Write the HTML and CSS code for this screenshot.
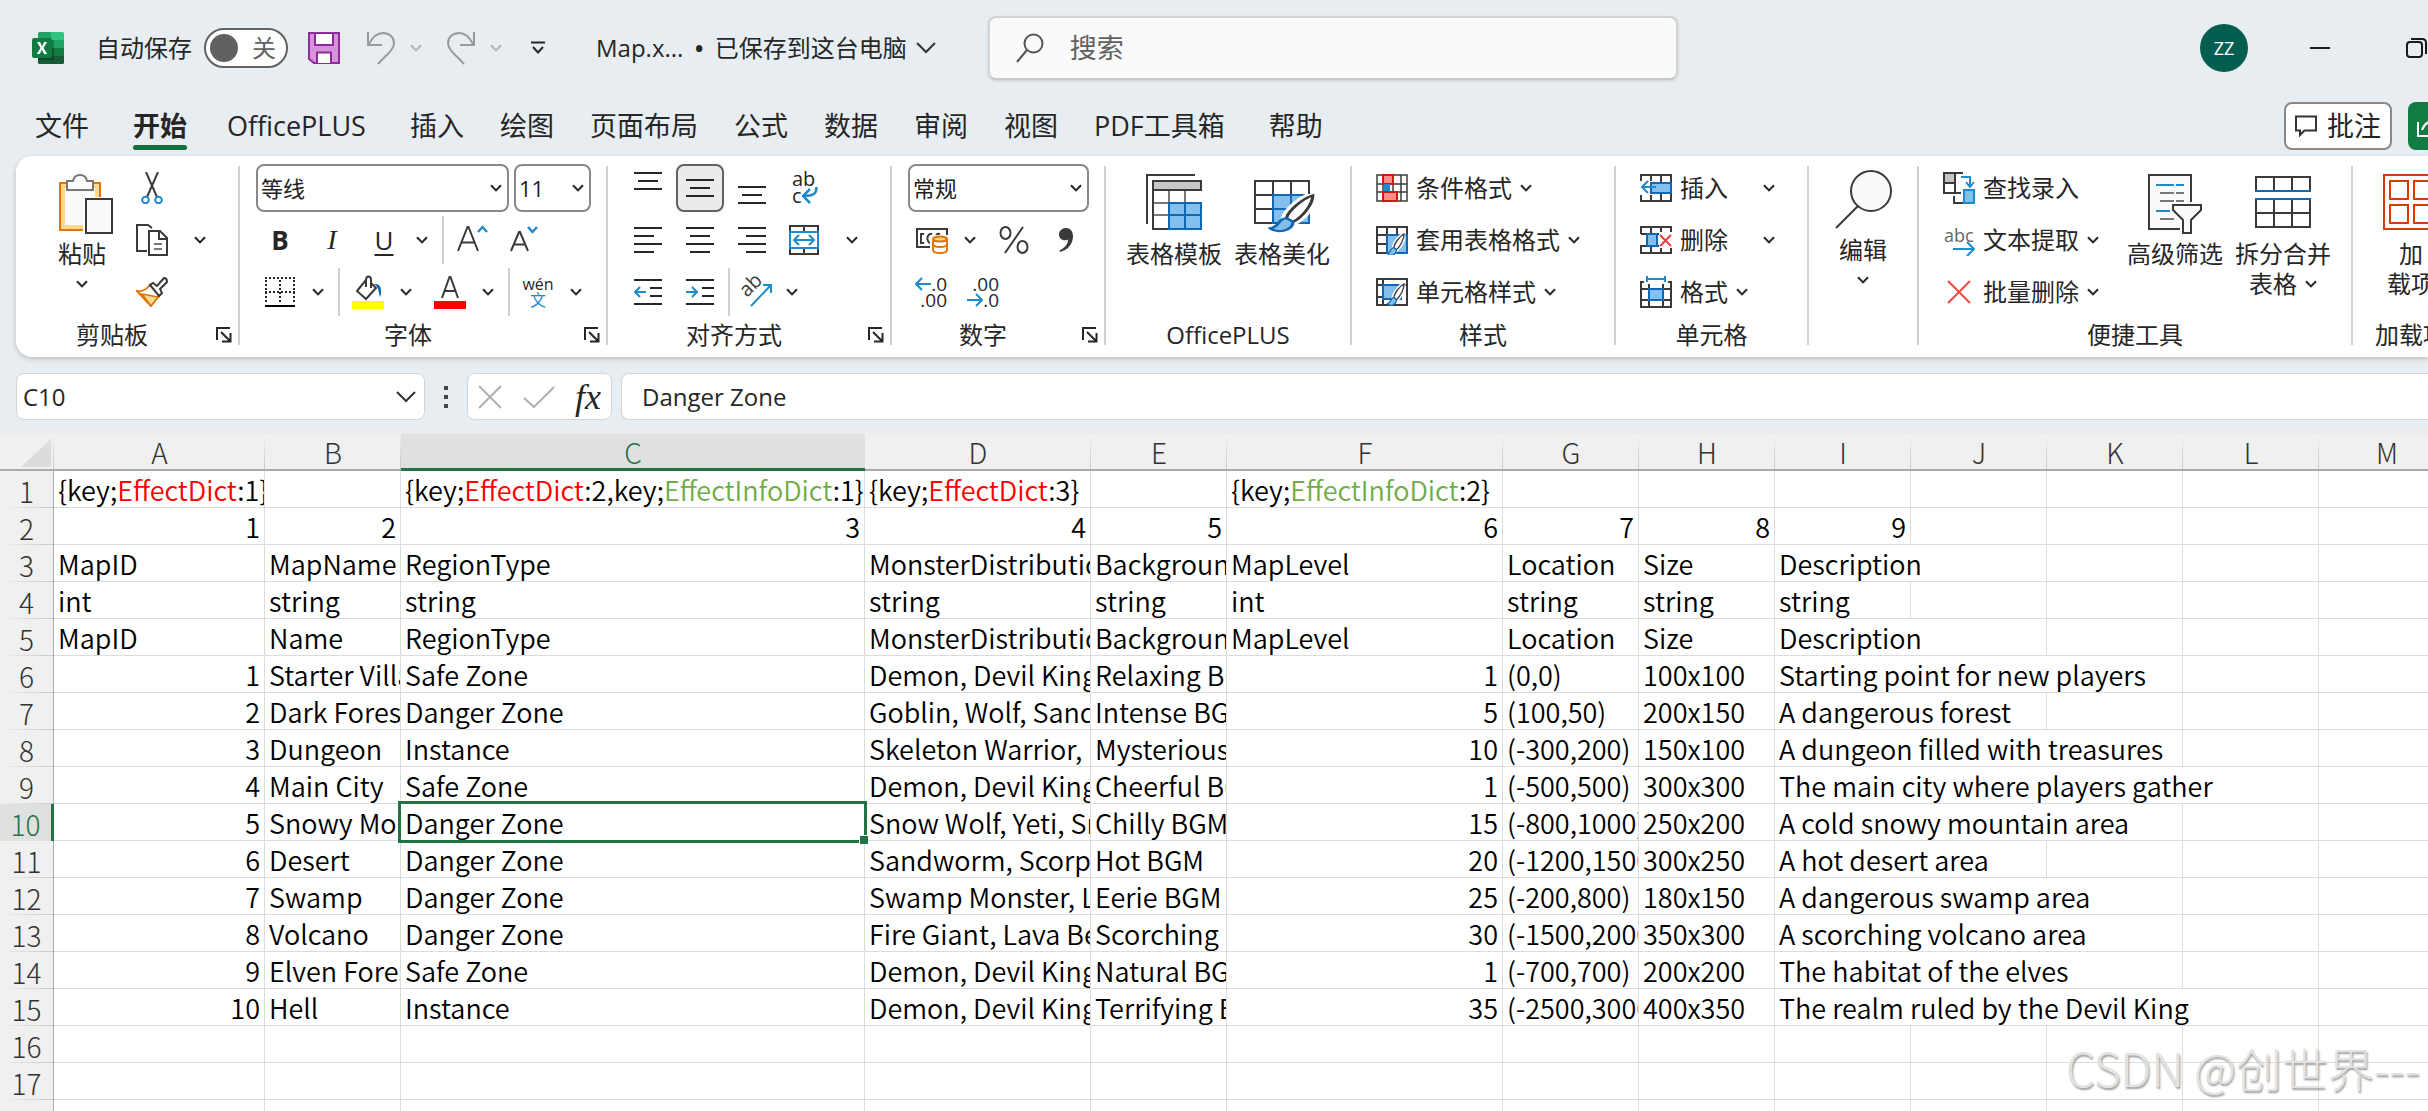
FILE: index.html
```html
<!DOCTYPE html>
<html lang="zh-CN">
<head>
<meta charset="utf-8">
<title>Map.xlsx - Excel</title>
<link rel="stylesheet" href="styles.css">
</head>
<body>
<svg class="defs" aria-hidden="true">
  <symbol id="chev" viewBox="0 0 12 8"><path d="M1 1.2 6 6.4 11 1.2" fill="none" stroke="currentColor" stroke-width="2"/></symbol>
  <symbol id="launch" viewBox="0 0 16 16"><path d="M1 13V1h13M5 5l9 9M14.5 6v8.5H6" fill="none" stroke="#262626" stroke-width="2"/></symbol>
  <symbol id="brush" viewBox="0 0 22 28"><path d="M20.5 1C16 3 9 12 8.500 17l3 2.500C16 16 20.500 7 20.500 1z" fill="#fff" stroke="#fff" stroke-width="5"/><path d="M20.500 1C16 3 9 12 8.500 17l3 2.500C16 16 20.500 7 20.500 1z" fill="#fff" stroke="#3b3a39" stroke-width="1.500"/><path d="M8.500 17c-4 0-3 6-7.500 7 3 3.500 10 2.500 10.500-4.500z" fill="#83beec" stroke="#0f67b5" stroke-width="1.500"/></symbol>
</svg>

<header class="top">
  <div class="titlebar">
    <svg class="excel" width="32" height="32" viewBox="0 0 32 32"><path d="M6 1.500Q6 0 7.500 0H19v8H6z" fill="#21a366"/><path d="M19 0h11.500Q32 0 32 1.500V8H19z" fill="#33c481"/><path d="M6 8h13v8H6z" fill="#107c41"/><path d="M19 8h13v8H19z" fill="#21a366"/><path d="M6 16h13v8H6z" fill="#185c37"/><path d="M19 16h13v8H19z" fill="#107c41"/><path d="M6 24h26v6.500q0 1.500-1.500 1.500h-23Q6 32 6 30.500z" fill="#185c37"/><path d="M6 8h14q2 0 2 2v16q0 2-2 2H6z" opacity=".25"/><rect y="6" width="20" height="20" rx="2" fill="#107c41"/><path d="m5 10h3l2 4.200L12.200 10H15l-3.500 6 3.600 6h-3l-2.200-4.300L7.700 22H4.800l3.700-6z" fill="#fff"/></svg>
    <label class="autosave"><span>自动保存</span><span class="switch"><input type="checkbox"><span>关</span></span></label>
    <button class="plain save" aria-label="保存"><svg width="32" height="32" viewBox="0 0 32 32"><path d="M1 1h30v30H6l-5-4z" fill="#d792dc" stroke="#8e2a9b" stroke-width="2"/><path d="M7 1h18v12H7zM9 31V20.500h14V31" fill="#fff" stroke="#8e2a9b" stroke-width="2"/></svg></button>
    <button class="plain undo" aria-label="撤消"><svg width="30" height="34" viewBox="0 0 30 34"><path d="M2 1v13h14M3 13C7 5 11 2 17 2c6 0 11 4 11 10 0 7-8 12-16 21" fill="none" stroke="#979a9c" stroke-width="2"/></svg></button>
    <button class="plain faint" aria-label="撤消选项"><svg width="12" height="8"><use href="#chev"/></svg></button>
    <button class="plain redo" aria-label="恢复"><svg width="30" height="34" viewBox="0 0 30 34"><path d="M28 1v13H14M27 13C23 5 19 2 13 2 7 2 2 6 2 12c0 7 8 12 16 21" fill="none" stroke="#979a9c" stroke-width="2"/></svg></button>
    <button class="plain faint" aria-label="恢复选项"><svg width="12" height="8"><use href="#chev"/></svg></button>
    <button class="plain qat" aria-label="自定义快速访问工具栏"><svg width="16" height="14" viewBox="0 0 16 14"><path d="M1 1.500h14M3 6l5 5.500L13 6" fill="none" stroke="#262626" stroke-width="2"/></svg></button>
    <button class="plain filename"><span>Map.x...</span><span class="dot">•</span><span>已保存到这台电脑</span><svg width="20" height="12" viewBox="0 0 20 12"><path d="m1 1 9 9 9-9" fill="none" stroke="#333" stroke-width="2"/></svg></button>
    <label class="search"><svg width="28" height="30" viewBox="0 0 28 30"><circle cx="17.500" cy="10.500" r="9" fill="none" stroke="#555" stroke-width="2"/><path d="M11 17 1 29" stroke="#555" stroke-width="2"/></svg><input type="text" placeholder="搜索" aria-label="搜索"></label>
    <button class="avatar">ZZ</button>
    <button class="plain minimize" aria-label="最小化"><svg width="20" height="2"><path d="M0 1h20" stroke="#1a1a1a" stroke-width="2"/></svg></button>
    <button class="plain restore" aria-label="还原"><svg width="22" height="20" viewBox="0 0 22 20"><rect x="1" y="4" width="15" height="15" rx="3" fill="none" stroke="#1a1a1a" stroke-width="2"/><path d="M5 1h11q4 0 4 4v11" fill="none" stroke="#1a1a1a" stroke-width="2"/></svg></button>
  </div>

  <nav class="tabs">
    <a class="tab tab-wide" href="#">文件</a>
    <a class="tab tab-active" href="#">开始</a>
    <a class="tab tab-wide" href="#">OfficePLUS</a>
    <a class="tab" href="#">插入</a>
    <a class="tab" href="#">绘图</a>
    <a class="tab" href="#">页面布局</a>
    <a class="tab" href="#">公式</a>
    <a class="tab" href="#">数据</a>
    <a class="tab" href="#">审阅</a>
    <a class="tab" href="#">视图</a>
    <a class="tab tab-wide" href="#">PDF工具箱</a>
    <a class="tab" href="#">帮助</a>
    <button class="comments"><svg width="22" height="22" viewBox="0 0 22 22"><path d="M1 1.500h20v14H9.500L5 20v-4.500H1z" fill="none" stroke="#333" stroke-width="2"/></svg>批注</button>
    <button class="share" aria-label="共享"><svg width="22" height="22" viewBox="0 0 22 22"><path d="M1 7v14h19v-5M5 15C7 9 11 6 18 6M14 1l6 5-6 5" fill="none" stroke="#fff" stroke-width="2"/></svg></button>
  </nav>

  <section class="ribbon">
    <div class="group g-clip">
      <div class="body">
        <button class="big paste"><svg width="56" height="60" viewBox="0 0 56 60"><path d="M2 9h40v47H2z" fill="#fad98f" stroke="#e07508" stroke-width="2"/><path d="M7 14h30v37H7z" fill="#fafafa"/><path d="M9 7h6q1-6 7-6t7 6h6v9H9z" fill="#fafafa" stroke="#7a7874" stroke-width="2"/><path d="M25 23h31v37H25z" fill="#fff"/><path d="M28 25h26v34H28z" fill="#fafafa" stroke="#3b3a39" stroke-width="2"/></svg><span>粘贴</span><span><svg width="12" height="8"><use href="#chev"/></svg></span></button>
        <div class="rows">
          <div class="row"><button class="tool" aria-label="剪切"><svg width="22" height="32" viewBox="0 0 22 32"><path d="M5 0l11 25M17 0 6 25" stroke="#3b3a39" stroke-width="2"/><circle cx="4.500" cy="28" r="3.300" fill="none" stroke="#1e8bcd" stroke-width="2"/><circle cx="17.500" cy="28" r="3.300" fill="none" stroke="#1e8bcd" stroke-width="2"/></svg></button></div>
          <div class="row"><button class="tool" aria-label="复制"><svg width="32" height="32" viewBox="0 0 32 32"><path d="M11 27H1V1h11l4 3" fill="none" stroke="#3b3a39" stroke-width="2"/><path d="M13 7h11l7 7v17H13z" fill="#fff" stroke="#3b3a39" stroke-width="2"/><path d="M23 7v8h8" fill="none" stroke="#3b3a39" stroke-width="2"/><path d="M18 20h8M18 25h8" stroke="#7a7874" stroke-width="2"/></svg></button><button class="drop far" aria-label="复制选项"><svg width="12" height="8"><use href="#chev"/></svg></button></div>
          <div class="row"><button class="tool" aria-label="格式刷"><svg width="32" height="30" viewBox="0 0 32 30"><path d="M1 14c5 1 9-1 13-6l10 10c-4 4-6 7-9 11z" fill="#fff" stroke="#e07508" stroke-width="2"/><path d="m6 17 16 3-7 9z" fill="#fad98f" stroke="#e07508" stroke-width="1.500"/><path d="m14 8 3-2 4 3 7-8q3 0 3 4l-7 7 2 4-3 3z" fill="#fff" stroke="#3b3a39" stroke-width="2"/></svg></button></div>
        </div>
      </div>
      <div class="foot with-launch"><span>剪贴板</span><button class="plain" aria-label="剪贴板设置"><svg width="16" height="16"><use href="#launch"/></svg></button></div>
    </div>
    <span class="sep"></span>

    <div class="group g-font">
      <div class="rows">
        <div class="row fields"><span class="field font-name"><select aria-label="字体"><option>等线</option></select><svg width="12" height="8"><use href="#chev"/></svg></span><span class="field font-size"><select aria-label="字号"><option>11</option></select><svg width="12" height="8"><use href="#chev"/></svg></span></div>
        <div class="row">
          <button class="tool bold">B</button><button class="tool italic">I</button><button class="tool under">U</button><button class="drop" aria-label="下划线选项"><svg width="12" height="8"><use href="#chev"/></svg></button><span class="vs"></span>
          <button class="tool" aria-label="增大字号"><svg width="32" height="32" viewBox="0 0 32 32"><path d="M2 27 11.500 3h1L22 27M5.500 18.500h13" fill="none" stroke="#3b3a39" stroke-width="2"/><path d="M22 8l4.500-5L31 8" fill="none" stroke="#1e8bcd" stroke-width="2.500"/></svg></button>
          <button class="tool" aria-label="减小字号"><svg width="28" height="32" viewBox="0 0 28 32"><path d="M1 27 9 8h1l8 19M4 20.500h11" fill="none" stroke="#3b3a39" stroke-width="2"/><path d="M18 3l4.500 5L27 3" fill="none" stroke="#1e8bcd" stroke-width="2.500"/></svg></button>
        </div>
        <div class="row">
          <button class="tool" aria-label="边框"><svg width="32" height="32" viewBox="0 0 32 32"><path d="M1 2h30M2 4v23M16 4v23M30 4v23M1 16h30" fill="none" stroke="#262626" stroke-width="2" stroke-dasharray="2 2"/><path d="M1 30h30" stroke="#000" stroke-width="2"/></svg></button><button class="drop" aria-label="边框选项"><svg width="12" height="8"><use href="#chev"/></svg></button><span class="vs"></span>
          <button class="tool" aria-label="填充颜色"><svg width="32" height="34" viewBox="0 0 32 34"><path d="M14 5 5 16l9 8 10-11-5-5M14 12V5q0-3.500 2.500-3.500T19 5v8" fill="none" stroke="#3b3a39" stroke-width="2"/><path d="M22 9c7-1 8 5 6.500 13C26 19 28 13 22 9z" fill="#0f67b5"/><path d="M0 26h32v8H0z" fill="#ff0"/></svg></button><button class="drop" aria-label="填充颜色选项"><svg width="12" height="8"><use href="#chev"/></svg></button>
          <button class="tool near" aria-label="字体颜色"><svg width="32" height="34" viewBox="0 0 32 34"><path d="M8 23 15.500 2h1L24 23M11 16h10" fill="none" stroke="#3b3a39" stroke-width="2"/><path d="M0 26h32v8H0z" fill="#f00"/></svg></button><button class="drop" aria-label="字体颜色选项"><svg width="12" height="8"><use href="#chev"/></svg></button><span class="vs"></span>
          <button class="tool pinyin"><span>wén</span><span class="blue">文</span></button><button class="drop" aria-label="拼音选项"><svg width="12" height="8"><use href="#chev"/></svg></button>
        </div>
      </div>
      <div class="foot with-launch"><span>字体</span><button class="plain" aria-label="字体设置"><svg width="16" height="16"><use href="#launch"/></svg></button></div>
    </div>
    <span class="sep"></span>

    <div class="group g-align">
      <div class="rows">
        <div class="row">
          <button class="tool" aria-label="顶端对齐"><svg width="28" height="32" viewBox="0 0 28 32"><path d="M0 1h28M4 9h20M0 17h28" stroke="#262626" stroke-width="2"/></svg></button><button class="tool" aria-label="垂直居中" aria-pressed="true"><span class="pressed"><svg width="28" height="18" viewBox="0 0 28 18"><path d="M0 1h28M4 9h20M0 17h28" stroke="#262626" stroke-width="2"/></svg></span></button><button class="tool" aria-label="底端对齐"><svg width="28" height="32" viewBox="0 0 28 32"><path d="M0 15h28M4 23h20M0 31h28" stroke="#262626" stroke-width="2"/></svg></button><button class="tool wrap"><span>ab</span><span>c<svg width="16" height="18" viewBox="0 0 16 18"><path d="M14.500 0c0 6-2 9-13 9M8 2 1 9l7 7" fill="none" stroke="#1e8bcd" stroke-width="2.500"/></svg></span></button>
        </div>
        <div class="row">
          <button class="tool" aria-label="左对齐"><svg width="28" height="26" viewBox="0 0 28 26"><path d="M0 1h28M0 9h20M0 17h28M0 25h20" stroke="#262626" stroke-width="2"/></svg></button><button class="tool" aria-label="居中"><svg width="28" height="26" viewBox="0 0 28 26"><path d="M0 1h28M4 9h20M0 17h28M4 25h20" stroke="#262626" stroke-width="2"/></svg></button><button class="tool" aria-label="右对齐"><svg width="28" height="26" viewBox="0 0 28 26"><path d="M0 1h28M8 9h20M0 17h28M8 25h20" stroke="#262626" stroke-width="2"/></svg></button><button class="tool" aria-label="合并后居中"><svg width="30" height="30" viewBox="0 0 30 30"><path d="M1 1h28v28H1zM15 1v28" fill="none" stroke="#3b3a39" stroke-width="2"/><path d="M1 7h28v16H1z" fill="#fff" stroke="#1e8bcd" stroke-width="2"/><path d="M5 15h20M10 10l-5 5 5 5M20 10l5 5-5 5" fill="none" stroke="#1e8bcd" stroke-width="2"/></svg></button><button class="drop far" aria-label="合并选项"><svg width="12" height="8"><use href="#chev"/></svg></button>
        </div>
        <div class="row">
          <button class="tool" aria-label="减少缩进量"><svg width="28" height="26" viewBox="0 0 28 26"><path d="M0 1h28M16 9h12M16 17h12M0 25h28" stroke="#262626" stroke-width="2"/><path d="M12 13H1M6 8l-5 5 5 5" fill="none" stroke="#1e8bcd" stroke-width="2"/></svg></button><button class="tool" aria-label="增加缩进量"><svg width="28" height="26" viewBox="0 0 28 26"><path d="M0 1h28M16 9h12M16 17h12M0 25h28" stroke="#262626" stroke-width="2"/><path d="M0 13h11M6 8l5 5-5 5" fill="none" stroke="#1e8bcd" stroke-width="2"/></svg></button><span class="vs tight"></span>
          <button class="tool slim" aria-label="方向"><svg class="spill" width="34" height="32" viewBox="0 0 34 32"><text x="8" y="22" transform="rotate(-45 8 22)" font-size="20" fill="#3b3a39">ab</text><path d="M12 30 32 9M24 9h8v8" fill="none" stroke="#1e8bcd" stroke-width="2"/></svg></button><button class="drop" aria-label="方向选项"><svg width="12" height="8"><use href="#chev"/></svg></button>
        </div>
      </div>
      <div class="foot with-launch"><span>对齐方式</span><button class="plain" aria-label="对齐设置"><svg width="16" height="16"><use href="#launch"/></svg></button></div>
    </div>
    <span class="sep"></span>

    <div class="group g-num">
      <div class="rows">
        <div class="row fields"><span class="field num-format"><select aria-label="数字格式"><option>常规</option></select><svg width="12" height="8"><use href="#chev"/></svg></span></div>
        <div class="row">
          <button class="tool" aria-label="会计数字格式"><svg width="32" height="28" viewBox="0 0 32 28"><path d="M1 3h30v18H1z" fill="none" stroke="#3b3a39" stroke-width="2"/><path d="M8 8H5v9h3M16 8c-6-1-6 9-1 9M20 10q1-3 4-2" fill="none" stroke="#3b3a39" stroke-width="2"/><path d="M14 9h18v19H14z" fill="#fff"/><path d="M17 13v11q0 3 7 3t7-3V13" fill="#fff" stroke="#e07508" stroke-width="2"/><path d="M17 18q0 3 7 3t7-3" fill="none" stroke="#e07508" stroke-width="2"/><ellipse cx="24" cy="13" rx="7" ry="2.500" fill="#fad98f" stroke="#e07508" stroke-width="2"/></svg></button><button class="drop" aria-label="会计格式选项"><svg width="12" height="8"><use href="#chev"/></svg></button>
          <button class="tool near" aria-label="百分比样式"><svg width="30" height="30" viewBox="0 0 30 30"><path d="M24 2 6 28" stroke="#3b3a39" stroke-width="2"/><ellipse cx="6.500" cy="8" rx="5" ry="6" fill="none" stroke="#3b3a39" stroke-width="2"/><ellipse cx="23.500" cy="22" rx="5" ry="6" fill="none" stroke="#3b3a39" stroke-width="2"/></svg></button><button class="tool" aria-label="千位分隔样式"><svg width="16" height="26" viewBox="0 0 16 26"><path d="M8 1c4 0 7 3 7 8 0 8-5 14-13 16l-.5-1.500C7 21 10 17 10 12.500 5 15 1 11.500 1 7.500 1 4 4 1 8 1z" fill="#3b3a39"/></svg></button>
        </div>
        <div class="row">
          <button class="tool decimals" aria-label="增加小数位数"><span><svg width="16" height="14" viewBox="0 0 16 14"><path d="M16 7H1M7 1 1 7l6 6" fill="none" stroke="#1e8bcd" stroke-width="2"/></svg>.0</span><span>.00</span></button><button class="tool decimals" aria-label="减少小数位数"><span>.00</span><span><svg width="16" height="14" viewBox="0 0 16 14"><path d="M0 7h15M9 1l6 6-6 6" fill="none" stroke="#1e8bcd" stroke-width="2"/></svg>.0</span></button>
        </div>
      </div>
      <div class="foot with-launch"><span>数字</span><button class="plain" aria-label="数字设置"><svg width="16" height="16"><use href="#launch"/></svg></button></div>
    </div>
    <span class="sep"></span>

    <div class="group g-plus">
      <div class="body">
        <button class="big"><svg width="56" height="60" viewBox="0 0 56 60"><path d="M1 50V1h48" fill="none" stroke="#3b3a39" stroke-width="2"/><path d="M7 7h48v48H7z" fill="#fff"/><path d="M7 7h48v9H7z" fill="#c8c6c4"/><path d="M7 16h48M23 16v39M39 16v39M7 29h48M7 41h48" fill="none" stroke="#7a7874" stroke-width="2"/><path d="M7 7h48v9H7zM7 16v39h16" fill="none" stroke="#3b3a39" stroke-width="2"/><path d="M23 29h32v26H23zM39 29v26M23 41h32" fill="#83beec" stroke="#0f67b5" stroke-width="2"/></svg><span>表格模板</span></button>
        <button class="big"><svg width="56" height="60" viewBox="0 0 56 60" class="spill"><path d="M1 7h54v42H1zM19 7v42M37 7v14M1 21h54M1 35h18" fill="none" stroke="#3b3a39" stroke-width="2"/><path d="M19 21h36v28H19zM37 21v28M19 35h36" fill="#83beec" stroke="#0f67b5" stroke-width="2"/><svg x="14" y="20" width="48" height="40" viewBox="0 0 22 28" preserveAspectRatio="none"><use href="#brush"/></svg></svg><span>表格美化</span></button>
      </div>
      <div class="foot"><span>OfficePLUS</span></div>
    </div>
    <span class="sep"></span>

    <div class="group g-style">
      <div class="rows">
        <div class="row"><button class="item"><svg width="32" height="28" viewBox="0 0 32 28"><path d="M1 1h30v26H1zM1 10h30M1 18h30M7 1v26M17 1v26M25 1v26" fill="#fff" stroke="#3b3a39" stroke-width="1.500"/><path d="M7 1h10v9H7z" fill="#ff8d8d" stroke="#d2190b" stroke-width="2"/><path d="M8 10h6v8H8z" fill="#1e8bcd"/><path d="M7 18h14v9H7z" fill="#ff8d8d" stroke="#d2190b" stroke-width="2"/></svg>条件格式<svg width="12" height="8"><use href="#chev"/></svg></button></div>
        <div class="row"><button class="item"><svg width="32" height="30" viewBox="0 0 32 30"><path d="M1 2h30v26H1zM11 2v26M21 2v8M1 10h30M1 19h10" fill="#fff" stroke="#3b3a39" stroke-width="2"/><path d="M11 10h20v18H11z" fill="#83beec" stroke="#0f67b5" stroke-width="2"/><svg x="8" y="8" width="24" height="24" viewBox="0 0 22 28"><use href="#brush"/></svg></svg>套用表格格式<svg width="12" height="8"><use href="#chev"/></svg></button></div>
        <div class="row"><button class="item"><svg width="32" height="30" viewBox="0 0 32 30"><path d="M1 2h30v26H1zM7 2v26M1 8h30M1 20h6" fill="#fff" stroke="#3b3a39" stroke-width="2"/><path d="M7 8h18v14H7z" fill="#83beec" stroke="#0f67b5" stroke-width="2"/><svg x="8" y="6" width="24" height="24" viewBox="0 0 22 28"><use href="#brush"/></svg></svg>单元格样式<svg width="12" height="8"><use href="#chev"/></svg></button></div>
      </div>
      <div class="foot"><span>样式</span></div>
    </div>
    <span class="sep"></span>

    <div class="group g-cells">
      <div class="rows">
        <div class="row"><button class="item"><svg width="32" height="28" viewBox="0 0 32 28"><path d="M1 1h30v26H1zM1 9h30M1 19h30M11 1v26M21 1v26" fill="#fff" stroke="#3b3a39" stroke-width="2"/><path d="M0 7h12v14H0z" fill="#fff"/><path d="M11 9h20v10H11z" fill="#83beec" stroke="#0f67b5" stroke-width="2"/><path d="M16 13H2M8 7l-6 6 6 6" fill="none" stroke="#1e8bcd" stroke-width="2"/></svg>插入</button><button class="drop split" aria-label="插入选项"><svg width="12" height="8"><use href="#chev"/></svg></button></div>
        <div class="row"><button class="item"><svg width="32" height="28" viewBox="0 0 32 28"><path d="M1 8V1h30v7H1M11 1v7M21 1v7M1 27v-7h30v7zM11 20v7M21 20v7M1 8h6v12H1" fill="#fff" stroke="#3b3a39" stroke-width="2"/><path d="M7 8h10v12H7z" fill="#83beec" stroke="#0f67b5" stroke-width="2"/><path d="M19 6h13v16H19z" fill="#fff"/><path d="m20 9 11 11M31 9 20 20" stroke="#e8413c" stroke-width="2"/></svg>删除</button><button class="drop split" aria-label="删除选项"><svg width="12" height="8"><use href="#chev"/></svg></button></div>
        <div class="row"><button class="item"><svg width="32" height="32" viewBox="0 0 32 32"><path d="M4 6H1v25h30V6h-3M1 13h30M1 24h30M9 8v23M23 8v23" fill="none" stroke="#3b3a39" stroke-width="2"/><path d="M9 13h14v11H9z" fill="#83beec" stroke="#0f67b5" stroke-width="2"/><path d="M7 0v6M25 0v6M7 3h18" stroke="#1e8bcd" stroke-width="2"/></svg>格式<svg width="12" height="8"><use href="#chev"/></svg></button></div>
      </div>
      <div class="foot"><span>单元格</span></div>
    </div>
    <span class="sep"></span>

    <div class="group g-edit">
      <div class="body">
        <button class="big raised"><svg width="60" height="60" viewBox="0 0 60 60"><circle cx="38" cy="21" r="20" fill="#fafafa" stroke="#3b3a39" stroke-width="2"/><path d="M25 36 3 58" stroke="#3b3a39" stroke-width="2"/></svg><span>编辑</span><span><svg width="12" height="8"><use href="#chev"/></svg></span></button>
      </div>
      <div class="foot"></div>
    </div>
    <span class="sep"></span>

    <div class="group g-tools">
      <div class="body">
        <div class="rows tools-list">
          <div class="row"><button class="item"><svg width="32" height="32" viewBox="0 0 32 32"><path d="M1 1h11v10H1z" fill="#c8c6c4"/><path d="M20 1H1v20h17M12 1v20M1 11h12M11 24v7h9" fill="none" stroke="#3b3a39" stroke-width="2"/><path d="M21 18h10v13H21z" fill="#83beec" stroke="#1e8bcd" stroke-width="2"/><path d="M19 9h8v7z" fill="#fff"/><path d="M18 5h9v10M23 10l4 5 4-5" fill="none" stroke="#1e8bcd" stroke-width="2"/></svg>查找录入</button></div>
          <div class="row"><button class="item"><svg width="32" height="32" viewBox="0 0 32 32"><text x="1" y="18" font-size="18" fill="#666">abc</text><path d="M10 25h20M24 18l7 7-7 7" fill="none" stroke="#1e8bcd" stroke-width="2"/></svg>文本提取<svg width="12" height="8"><use href="#chev"/></svg></button></div>
          <div class="row"><button class="item"><svg width="32" height="28" viewBox="0 0 32 28"><path d="m5 3 22 22M27 3 5 25" stroke="#f04a43" stroke-width="2"/></svg>批量删除<svg width="12" height="8"><use href="#chev"/></svg></button></div>
        </div>
        <button class="big"><svg width="54" height="60" viewBox="0 0 54 60"><path d="M1 1h42v54H1z" fill="#fafafa" stroke="#3b3a39" stroke-width="2"/><path d="M8 11h18M28 11h8M8 37h14" stroke="#1e8bcd" stroke-width="2"/><path d="M12 19h14M28 19h8M12 27h14M28 27h8M12 45h14" stroke="#7a7874" stroke-width="2"/><path d="M22 28h32v32H32V47L22 37z" fill="#fff"/><path d="M25 31h28v5L43 46v13h-8V46L25 36z" fill="#fafafa" stroke="#3b3a39" stroke-width="2"/></svg><span>高级筛选</span></button>
        <button class="big"><svg width="56" height="60" viewBox="0 0 56 60"><path d="M1 17V3h54v14M19 3v14M37 3v14M1 25v28h54V25M19 25v28M37 25v28M1 39h54" fill="none" stroke="#3b3a39" stroke-width="2"/><path d="M0 17h56M0 25h56" stroke="#0f67b5" stroke-width="2"/></svg><span>拆分合并</span><span>表格 <svg width="12" height="8"><use href="#chev"/></svg></span></button>
      </div>
      <div class="foot"><span>便捷工具</span></div>
    </div>
    <span class="sep"></span>

    <div class="group g-addins">
      <div class="body">
        <button class="big"><svg width="56" height="60" viewBox="0 0 56 60"><path d="M1 1h54v54H1zM7 7h18v18H7zM31 7h18v18H31zM7 31h18v18H7zM31 31h18v18H31z" fill="none" stroke="#d83b01" stroke-width="2"/></svg><span>加</span><span>载项</span></button>
      </div>
      <div class="foot"><span>加载项</span></div>
    </div>
  </section>

  <div class="formulabar">
    <span class="box namebox"><input type="text" value="C10" aria-label="名称框"><svg width="20" height="12" viewBox="0 0 20 12"><path d="m1 1 9 9 9-9" fill="none" stroke="#333" stroke-width="2"/></svg></span>
    <svg class="grip" width="4" height="22" viewBox="0 0 4 22"><path d="M0 0h4v4H0zM0 9h4v4H0zM0 18h4v4H0z" fill="#444"/></svg>
    <span class="box fx"><button class="plain" aria-label="取消"><svg width="24" height="24" viewBox="0 0 24 24"><path d="m1 1 22 22M23 1 1 23" stroke="#b0b0b0" stroke-width="2"/></svg></button><button class="plain" aria-label="输入"><svg width="32" height="22" viewBox="0 0 32 22"><path d="m1 12 10 9L31 1" fill="none" stroke="#b0b0b0" stroke-width="2"/></svg></button><button class="plain fxbtn">fx</button></span>
    <span class="box entry"><input type="text" value="Danger Zone" aria-label="编辑栏"></span>
  </div>
</header>

<main class="sheet">
<table class="grid">
<colgroup><col class="c-head"><col class="c-a"><col class="c-std"><col class="c-c"><col class="c-d"><col class="c-std"><col class="c-f"><col class="c-std"><col class="c-std"><col class="c-std"><col class="c-std"><col class="c-std"><col class="c-std"><col class="c-std"></colgroup>
<thead><tr><th class="corner"><svg width="30" height="28" viewBox="0 0 30 28"><path d="M30 0v28H0z" fill="#dcdcdc"/></svg></th><th>A</th><th>B</th><th class="on">C</th><th>D</th><th>E</th><th>F</th><th>G</th><th>H</th><th>I</th><th>J</th><th>K</th><th>L</th><th>M</th></tr></thead>
<tbody>
<tr><th>1</th><td>{key;<span class="red">EffectDict</span>:1}</td><td></td><td>{key;<span class="red">EffectDict</span>:2,key;<span class="green">EffectInfoDict</span>:1}</td><td>{key;<span class="red">EffectDict</span>:3}</td><td></td><td>{key;<span class="green">EffectInfoDict</span>:2}</td><td></td><td></td><td></td><td></td><td></td><td></td><td></td></tr>
<tr><th>2</th><td class="n">1</td><td class="n">2</td><td class="n">3</td><td class="n">4</td><td class="n">5</td><td class="n">6</td><td class="n">7</td><td class="n">8</td><td class="n">9</td><td></td><td></td><td></td><td></td></tr>
<tr><th>3</th><td>MapID</td><td>MapName</td><td>RegionType</td><td>MonsterDistribution</td><td>Background</td><td>MapLevel</td><td>Location</td><td>Size</td><td colspan="2">Description</td><td></td><td></td><td></td></tr>
<tr><th>4</th><td>int</td><td>string</td><td>string</td><td>string</td><td>string</td><td>int</td><td>string</td><td>string</td><td>string</td><td></td><td></td><td></td><td></td></tr>
<tr><th>5</th><td>MapID</td><td>Name</td><td>RegionType</td><td>MonsterDistribution</td><td>Background</td><td>MapLevel</td><td>Location</td><td>Size</td><td colspan="2">Description</td><td></td><td></td><td></td></tr>
<tr><th>6</th><td class="n">1</td><td>Starter Villa</td><td>Safe Zone</td><td>Demon, Devil King</td><td>Relaxing BG</td><td class="n">1</td><td>(0,0)</td><td>100x100</td><td colspan="3">Starting point for new players</td><td></td><td></td></tr>
<tr><th>7</th><td class="n">2</td><td>Dark Forest</td><td>Danger Zone</td><td>Goblin, Wolf, Sand</td><td>Intense BGM</td><td class="n">5</td><td>(100,50)</td><td>200x150</td><td colspan="2">A dangerous forest</td><td></td><td></td><td></td></tr>
<tr><th>8</th><td class="n">3</td><td>Dungeon</td><td>Instance</td><td>Skeleton Warrior,</td><td>Mysterious</td><td class="n">10</td><td>(-300,200)</td><td>150x100</td><td colspan="3">A dungeon filled with treasures</td><td></td><td></td></tr>
<tr><th>9</th><td class="n">4</td><td>Main City</td><td>Safe Zone</td><td>Demon, Devil King</td><td>Cheerful BG</td><td class="n">1</td><td>(-500,500)</td><td>300x300</td><td colspan="4">The main city where players gather</td><td></td></tr>
<tr><th class="on">10</th><td class="n">5</td><td>Snowy Mou</td><td class="selected">Danger Zone<span class="cursor"></span></td><td>Snow Wolf, Yeti, Sn</td><td>Chilly BGM</td><td class="n">15</td><td>(-800,1000)</td><td>250x200</td><td colspan="3">A cold snowy mountain area</td><td></td><td></td></tr>
<tr><th>11</th><td class="n">6</td><td>Desert</td><td>Danger Zone</td><td>Sandworm, Scorpi</td><td>Hot BGM</td><td class="n">20</td><td>(-1200,1500)</td><td>300x250</td><td colspan="2">A hot desert area</td><td></td><td></td><td></td></tr>
<tr><th>12</th><td class="n">7</td><td>Swamp</td><td>Danger Zone</td><td>Swamp Monster, L</td><td>Eerie BGM</td><td class="n">25</td><td>(-200,800)</td><td>180x150</td><td colspan="3">A dangerous swamp area</td><td></td><td></td></tr>
<tr><th>13</th><td class="n">8</td><td>Volcano</td><td>Danger Zone</td><td>Fire Giant, Lava Bea</td><td>Scorching</td><td class="n">30</td><td>(-1500,2000)</td><td>350x300</td><td colspan="3">A scorching volcano area</td><td></td><td></td></tr>
<tr><th>14</th><td class="n">9</td><td>Elven Forest</td><td>Safe Zone</td><td>Demon, Devil King</td><td>Natural BGM</td><td class="n">1</td><td>(-700,700)</td><td>200x200</td><td colspan="3">The habitat of the elves</td><td></td><td></td></tr>
<tr><th>15</th><td class="n">10</td><td>Hell</td><td>Instance</td><td>Demon, Devil King</td><td>Terrifying BG</td><td class="n">35</td><td>(-2500,3000)</td><td>400x350</td><td colspan="4">The realm ruled by the Devil King</td><td></td></tr>
<tr><th>16</th><td></td><td></td><td></td><td></td><td></td><td></td><td></td><td></td><td></td><td></td><td></td><td></td><td></td></tr>
<tr><th>17</th><td></td><td></td><td></td><td></td><td></td><td></td><td></td><td></td><td></td><td></td><td></td><td></td><td></td></tr>
<tr><th>18</th><td></td><td></td><td></td><td></td><td></td><td></td><td></td><td></td><td></td><td></td><td></td><td></td><td></td></tr>
</tbody>
</table>
<span class="watermark">CSDN @创世界---</span>
</main>
</body>
</html>
```
FILE: styles.css
```css
* { box-sizing: border-box; }

body {
  margin: 0;
  height: 100vh;
  overflow: hidden;
  display: flex;
  flex-direction: column;
  background: #e8edf1;
  color: #262626;
  font: 24px/30px "Open Sans", "Noto Sans CJK SC", sans-serif;
}

button, input, select { font: inherit; color: inherit; margin: 0; padding: 0; }
button { border: 0; background: none; white-space: nowrap; }
svg { flex: none; display: block; }
.spill { overflow: visible; }
.defs { position: absolute; width: 0; height: 0; }
.plain { display: flex; align-items: center; justify-content: center; }
.top { flex: none; }

/* title bar */
.titlebar { display: flex; align-items: center; height: 96px; padding-left: 32px; }
.autosave { display: flex; align-items: center; gap: 12px; margin-left: 32px; white-space: nowrap; }
.switch {
  display: flex; align-items: center; justify-content: space-between;
  width: 84px; height: 40px; padding: 0 10px 0 4px;
  border: 2px solid #616161; border-radius: 20px; background: #fff; color: #616161;
}
.switch input { appearance: none; width: 28px; height: 28px; border-radius: 50%; background: #616161; }
.save { margin-left: 20px; }
.undo { margin: 0 14px 0 26px; }
.redo { margin: 0 14px 0 24px; }
.faint { color: #b4b8bb; }
.qat { margin-left: 28px; }
.filename { margin-left: 50px; }
.filename .dot { margin: 0 10px; font-size: 30px; }
.filename svg { margin-left: 9px; }
.search {
  display: flex; align-items: center; gap: 26px;
  flex: 0 1 690px; height: 64px; margin-left: 52px; padding-left: 26px;
  border: 2px solid #d4d4d4; border-bottom-color: #c8c8c8; border-radius: 8px;
  background: #fafafa; box-shadow: 0 1px 3px #0002;
}
.search input { flex: 1; min-width: 0; border: 0; outline: 0; background: none; font-size: 27px; }
.search input::placeholder { color: #616161; opacity: 1; }
.avatar {
  width: 48px; height: 48px; margin-left: auto; border-radius: 50%;
  background: #035e50; color: #fff; font-size: 18px; text-align: center;
}
.minimize { margin: 0 76px 0 62px; }

/* tabs */
.tabs { display: flex; height: 60px; padding: 6px 0 6px 17px; font-size: 27px; }
.tab {
  display: flex; flex-direction: column; justify-content: space-between;
  margin: 0 18px; padding-top: 7px; line-height: 34px;
  color: #262626; text-decoration: none; white-space: nowrap;
}
.tab-wide { margin-right: 26px; }
.tab-active { font-weight: 700; margin-right: 22px; }
.tab-active::after { content: ""; height: 5px; border-radius: 3px; background: #0f703b; }
.comments {
  display: flex; align-items: center; justify-content: center; gap: 10px;
  width: 108px; height: 48px; margin-left: auto;
  border: 2px solid #8a8886; border-radius: 8px; background: #fff;
}
.share { width: 20px; margin-left: 16px; padding-left: 9px; border-radius: 8px 0 0 8px; background: #107c41; overflow: hidden; }

/* ribbon */
.ribbon {
  display: flex; height: 201px; margin-left: 16px; padding-top: 6px; overflow: hidden;
  border-radius: 16px 0 0 16px; background: #fff; box-shadow: 0 2px 5px #0003;
}
.sep { flex: none; width: 2px; height: 179px; margin-top: 4px; background: #d1d1d1; }
.group { flex: none; display: flex; flex-direction: column; }
.g-clip { width: 222px; }
.g-font { width: 366px; }
.g-align { width: 282px; }
.g-num { width: 212px; }
.g-plus { width: 244px; }
.g-style { width: 262px; }
.g-cells { width: 191px; }
.g-edit { width: 108px; }
.g-tools { width: 432px; }
.g-addins { width: 116px; }
.body { display: flex; height: 156px; }
.g-clip .body { padding-left: 30px; gap: 8px; }
.g-plus .body { padding-left: 14px; }
.g-tools .body, .g-style .rows, .g-cells .rows { padding-left: 24px; }
.g-edit .body, .g-addins .body { justify-content: center; }
.g-tools .rows { padding-left: 0; }
.g-font > .rows, .g-align > .rows, .g-num > .rows { padding-left: 14px; }
.row { display: flex; align-items: center; height: 52px; }
.tools-list { width: 178px; }
.foot { display: grid; justify-items: center; align-items: center; height: 36px; line-height: 34px; align-content: start; }
.with-launch { grid-template-columns: 1fr 30px; }
.with-launch .plain { justify-self: start; padding-left: 8px; }

.tool { display: flex; align-items: center; justify-content: center; flex: none; width: 52px; height: 48px; }
.slim { width: 48px; }
.near { margin-left: 6px; }
.drop { display: flex; align-items: center; justify-content: center; flex: none; width: 24px; height: 48px; }
.far { margin-left: 10px; }
.split { margin-left: 29px; }
.vs { flex: none; width: 2px; height: 48px; margin: 0 2px 0 8px; background: #d1d1d1; }
.tight { margin: 0 2px; }
.item { display: flex; align-items: center; gap: 8px; }
.big { display: flex; flex-direction: column; align-items: center; width: 108px; padding-top: 12px; }
.big > svg { margin-bottom: 5px; }
.big span { display: flex; align-items: center; justify-content: center; gap: 8px; height: 30px; }
.paste { width: 72px; }
.paste > svg { margin-left: 8px; }
.raised { padding-top: 8px; }

.fields { gap: 5px; padding-left: 2px; }
.field { display: flex; align-items: center; height: 48px; padding-right: 5px; border: 2px solid #8a8886; border-radius: 8px; background: #fff; }
.field select { flex: 1; min-width: 0; height: 40px; padding-left: 3px; border: 0; appearance: none; background: none; font-size: 22px; color: #222; }
.font-name { width: 253px; }
.font-size { width: 77px; }
.num-format { width: 181px; }

.bold { font-weight: 700; font-size: 26px; }
.italic { font: italic 28px "Liberation Serif", serif; }
.under { font-size: 26px; text-decoration: underline; text-underline-offset: 4px; text-decoration-thickness: 2px; }
.pinyin { flex-direction: column; font-size: 16px; line-height: 16px; }
.blue { color: #1e8bcd; }
.pressed { display: flex; align-items: center; justify-content: center; width: 48px; height: 48px; border: 2px solid #616161; border-radius: 8px; background: #ebebeb; }
.wrap { flex-direction: column; align-items: flex-start; padding-left: 14px; font-size: 20px; line-height: 16px; }
.wrap span { display: flex; align-items: center; }
.decimals { flex-direction: column; align-items: flex-end; padding-right: 11px; font-size: 19px; line-height: 16px; }
.decimals span { display: flex; align-items: center; }

/* formula bar */
.formulabar { display: flex; align-items: center; height: 77px; padding: 2px 0 0 16px; }
.box { display: flex; align-items: center; height: 47px; border: 1px solid #d4d4d4; border-radius: 8px; background: #fff; }
.box input { flex: 1; min-width: 0; border: 0; outline: 0; background: none; }
.namebox { width: 409px; padding: 0 8px 0 6px; }
.grip { margin: 0 19px; }
.fx { width: 145px; justify-content: space-between; padding: 0 10px; }
.fxbtn { font: italic 36px/40px "Liberation Serif", serif; }
.entry { flex: 1; margin-left: 9px; padding-left: 20px; border-right: 0; border-radius: 8px 0 0 8px; }

/* worksheet */
.sheet { position: relative; flex: 1; min-height: 0; overflow: hidden; background: #fff; }
.grid {
  width: 100%; table-layout: fixed; border-collapse: separate; border-spacing: 0;
  font: 350 27px/34px "Noto Sans CJK SC", sans-serif; color: #000;
}
.c-head { width: 54px; }
.c-a { width: 211px; }
.c-std { width: 136px; }
.c-c { width: 464px; }
.c-d { width: 226px; }
.c-f { width: 276px; }
.grid td {
  height: 37px; padding: 2px 4px 0; overflow: hidden; white-space: nowrap;
  border-right: 1px solid #dcdcdc; border-bottom: 1px solid #dcdcdc;
}
.grid th { padding: 2px 0 0; font-weight: 300; font-size: 28px; color: #333; background: #f0f0f0; }
.grid thead th {
  height: 37px; border-bottom: 2px solid #ababab; line-height: 33px;
  background: linear-gradient(#f0f0f0, #c8c8c8) right / 1px 100% no-repeat #f0f0f0;
}
.grid tbody th {
  border-right: 1px solid #ababab;
  background: linear-gradient(90deg, #f0f0f0, #c8c8c8) bottom / 100% 1px no-repeat #f0f0f0;
}
.grid thead .on { background: #e0e0e0; border-bottom: 3px solid #217346; color: #217346; line-height: 32px; }
.grid tbody .on { background: #e0e0e0; border-right: 3px solid #217346; color: #217346; }
.corner svg { margin-left: 21px; }
.grid .n { text-align: right; }
.red { color: #f00; }
.green { color: #70ad47; }
.grid .selected { position: relative; overflow: visible; }
.cursor { position: absolute; inset: -3px; border: 3px solid #217346; }
.cursor::after {
  content: ""; position: absolute; right: -4px; bottom: -4px; width: 8px; height: 8px;
  border: solid #fff; border-width: 1px 0 0 1px; background: #217346;
}
.watermark {
  position: absolute; right: 8px; bottom: 14px;
  font: 300 46px/60px "Noto Sans CJK SC", sans-serif; color: #e2e2e2;
  text-shadow: 1px 2px 2px #999; white-space: nowrap;
}
```
